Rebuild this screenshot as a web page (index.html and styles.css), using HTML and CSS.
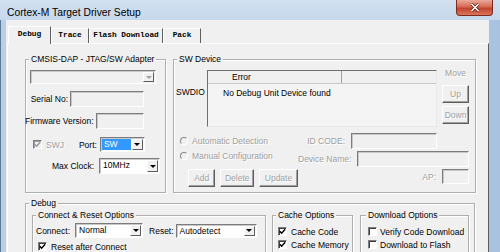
FILE: index.html
```html
<!DOCTYPE html>
<html>
<head>
  <title>Cortex-M Target Driver Setup</title>
  <link rel="stylesheet" href="styles.css">
</head>
<body>
  <div class="window">
    <div class="titlebar">
      <span class="title">Cortex-M Target Driver Setup</span>
      <div class="close-btn">
        <svg width="12" height="9" viewBox="0 0 12 9">
          <path d="M2.5 1 L9.5 8 M9.5 1 L2.5 8" stroke="#5a1a10" stroke-width="3"/>
          <path d="M2.5 1 L9.5 8 M9.5 1 L2.5 8" stroke="#fff" stroke-width="1.6"/>
        </svg>
      </div>
    </div>

    <div class="client">
      <div class="tabs">
        <div class="tab active">Debug</div>
        <div class="tab tab-trace">Trace</div>
        <div class="tab tab-flash">Flash Download</div>
        <div class="tab tab-pack">Pack</div>
      </div>

      <div class="panel">
        <div class="top-row">
          <!-- adapter -->
          <fieldset class="group adapter">
            <legend>CMSIS-DAP - JTAG/SW Adapter</legend>
            <div class="select adapter-combo disabled">
              <span class="value"></span>
              <span class="drop"></span>
            </div>
            <div class="field-row serial-row">
              <span class="lbl serial-lbl">Serial No:</span>
              <div class="edit serial-edit"></div>
            </div>
            <div class="field-row fw-row">
              <span class="lbl fw-lbl">Firmware Version:</span>
              <div class="edit fw-edit"></div>
            </div>
            <div class="field-row port-row">
              <span class="check disabled checked">
                <svg width="7" height="7" viewBox="0 0 7 7"><path d="M0.8 3.2 L2.6 5.2 L6.2 1.2" fill="none" stroke="#9a9a9a" stroke-width="1.4"/></svg>
              </span>
              <span class="muted swj">SWJ</span>
              <span class="lbl port-lbl">Port:</span>
              <div class="select port-select">
                <span class="value selected">SW</span>
                <span class="drop"></span>
              </div>
            </div>
            <div class="field-row clock-row">
              <span class="lbl clock-lbl">Max Clock:</span>
              <div class="select clock-select">
                <span class="value">10MHz</span>
                <span class="drop"></span>
              </div>
            </div>
          </fieldset>

          <!-- device -->
          <fieldset class="group device">
            <legend>SW Device</legend>
            <div class="device-list">
              <span class="swdio">SWDIO</span>
              <div class="list">
                <div class="list-head">
                  <span class="head-error">Error</span>
                  <span class="head-rest"></span>
                </div>
                <div class="list-row">No Debug Unit Device found</div>
              </div>
              <div class="side-buttons">
                <div class="btn flat">Move</div>
                <div class="btn">Up</div>
                <div class="btn">Down</div>
              </div>
            </div>
            <div class="device-config">
              <div class="radio-row"><span class="radio"></span><span class="muted">Automatic Detection</span></div>
              <div class="id-row id-code"><span class="muted">ID CODE:</span><div class="edit"></div></div>
              <div class="radio-row radio-manual"><span class="radio"></span><span class="muted">Manual Configuration</span></div>
              <div class="id-row id-name"><span class="muted">Device Name:</span><div class="edit"></div></div>
              <div class="btn-row">
                <div class="btn btn-add">Add</div>
                <div class="btn btn-delete">Delete</div>
                <div class="btn btn-update">Update</div>
              </div>
              <div class="id-row id-ap"><span class="muted">AP:</span><div class="edit"></div></div>
            </div>
          </fieldset>
        </div>

        <fieldset class="group debug">
          <legend>Debug</legend>
          <div class="debug-row">
            <fieldset class="group connect">
              <legend>Connect &amp; Reset Options</legend>
              <div class="field-row connect-row">
                <span class="lbl">Connect:</span>
                <div class="select connect-select">
                  <span class="value">Normal</span>
                  <span class="drop"></span>
                </div>
                <span class="lbl reset-lbl">Reset:</span>
                <div class="select reset-select">
                  <span class="value">Autodetect</span>
                  <span class="drop"></span>
                </div>
              </div>
              <div class="check-row reset-after">
                <span class="check checked">
                  <svg width="7" height="7" viewBox="0 0 7 7"><path d="M0.8 3.2 L2.6 5.2 L6.2 1.2" fill="none" stroke="#000" stroke-width="1.4"/></svg>
                </span>
                <span>Reset after Connect</span>
              </div>
            </fieldset>

            <fieldset class="group cache">
              <legend>Cache Options</legend>
              <div class="check-row">
                <span class="check checked">
                  <svg width="7" height="7" viewBox="0 0 7 7"><path d="M0.8 3.2 L2.6 5.2 L6.2 1.2" fill="none" stroke="#000" stroke-width="1.4"/></svg>
                </span>
                <span>Cache Code</span>
              </div>
              <div class="check-row">
                <span class="check checked">
                  <svg width="7" height="7" viewBox="0 0 7 7"><path d="M0.8 3.2 L2.6 5.2 L6.2 1.2" fill="none" stroke="#000" stroke-width="1.4"/></svg>
                </span>
                <span>Cache Memory</span>
              </div>
            </fieldset>

            <fieldset class="group download">
              <legend>Download Options</legend>
              <div class="check-row">
                <span class="check"></span>
                <span>Verify Code Download</span>
              </div>
              <div class="check-row">
                <span class="check"></span>
                <span>Download to Flash</span>
              </div>
            </fieldset>
          </div>
        </fieldset>
      </div>
    </div>
  </div>
</body>
</html>
```

FILE: styles.css
```css
body {
  margin: 0;
  font-family: "Liberation Sans", Arial, sans-serif;
  font-size: 8.5px;
  color: #000;
  overflow: hidden;
}

.window {
  width: 500px;
  height: 252px;
  background: linear-gradient(90deg, #b9cfe7, #c3d6ec 40%, #a9c2df);
  box-shadow: inset 1px 0 #5f7896;
  display: flex;
  flex-direction: column;
  overflow: hidden;
}

.titlebar {
  height: 20px;
  flex: none;
  display: flex;
  justify-content: space-between;
  align-items: flex-start;
  background: linear-gradient(#d2e0ef, #c6d8ec);
}

.title {
  font-size: 10.3px;
  line-height: 11px;
  padding: 7px 0 0 7px;
  color: #000;
}

.close-btn {
  width: 35px;
  height: 15px;
  margin-right: 7px;
  border: 1px solid #7b2a1d;
  border-top: none;
  border-radius: 0 0 4px 4px;
  background: linear-gradient(#eaa899, #d66a52 45%, #c2432c 55%, #d8755c);
  display: flex;
  align-items: center;
  justify-content: center;
}

.client {
  width: 483px;
  margin-left: 6px;
  flex: 1;
  background: #f0f0f0;
  display: flex;
  flex-direction: column;
}

/* tabs */
.tabs {
  display: flex;
  align-items: flex-end;
  padding: 6px 0 0 2px;
  height: 17px;
  box-sizing: content-box;
}

.tab {
  height: 15px;
  box-sizing: border-box;
  border-top: 1px solid #fff;
  border-left: 1px solid #fff;
  border-right: 1px solid #5e5e5e;
  font-family: "Liberation Mono", monospace;
  font-weight: bold;
  font-size: 7.8px;
  line-height: 13px;
  text-align: center;
  color: #000;
}

.tab.active {
  width: 43px;
  height: 18px;
  margin-bottom: -1px;
  background: #f0f0f0;
  position: relative;
  line-height: 15px;
}

.tab-trace { width: 38px; }
.tab-flash { width: 74px; }
.tab-pack { width: 38px; }

.panel {
  flex: 1;
  margin-left: 1px;
  border-top: 1px solid #fff;
  border-left: 1px solid #fff;
  border-right: 1px solid #5e5e5e;
  padding: 10px 0 0 17px;
}

/* group boxes */
.group {
  margin: 0;
  padding: 0;
  min-width: 0;
  border: 1px solid #aeaeae;
  box-shadow: inset 1px 1px #fff, 1px 1px #fff;
}

.group legend {
  margin-left: 3px;
  padding: 0 2px;
  line-height: 10px;
  background: #f0f0f0;
}

.top-row {
  display: flex;
  gap: 7px;
  height: 139px;
}

.adapter {
  width: 141px;
  box-sizing: border-box;
}

.device {
  width: 303px;
  box-sizing: border-box;
  padding-right: 5px;
}

/* edits and selects */
.edit {
  height: 16px;
  box-sizing: border-box;
  border: 1px solid;
  border-color: #7c7c7c #fff #fff #7c7c7c;
  box-shadow: inset 1px 1px #c8c8c8;
  background: #f0f0f0;
}

.select {
  height: 15px;
  box-sizing: border-box;
  display: flex;
  border: 1px solid;
  border-color: #7c7c7c #fff #fff #7c7c7c;
  box-shadow: inset 1px 1px #c8c8c8;
  background: #fff;
  padding: 1px;
}

.select .value {
  flex: 1;
  line-height: 11px;
  padding-left: 2px;
}

.select .value.selected {
  background: #3399ff;
  color: #fff;
  margin-right: 1px;
}

.select .drop {
  width: 11px;
  box-sizing: border-box;
  border: 1px solid;
  border-color: #fff #5e5e5e #5e5e5e #fff;
  background: #f0f0f0;
  display: flex;
  align-items: center;
  justify-content: center;
}

.select .drop::after {
  content: '';
  border-left: 3px solid transparent;
  border-right: 3px solid transparent;
  border-top: 3px solid #000;
}

.select.disabled {
  background: #f0f0f0;
}

.select.disabled .drop::after {
  border-top-color: #a0a0a0;
}

.field-row {
  display: flex;
  align-items: center;
}

.lbl {
  white-space: nowrap;
}

/* adapter group */
.adapter-combo {
  width: 126px;
  height: 14px;
  margin: 6px 0 0 4px;
}

.serial-row { margin-top: 7px; }
.serial-lbl { width: 42px; text-align: right; margin-right: 2px; }
.serial-edit { width: 74px; }

.fw-row { margin-top: 6px; }
.fw-lbl { margin-left: -1px; margin-right: 2px; }
.fw-edit { width: 48px; }

.port-row { margin-top: 8px; height: 15px; }
.port-row .check { margin-left: 7px; }
.swj { margin-left: 4px; }
.port-lbl { margin-left: 15px; margin-right: 3px; }
.port-select { width: 45px; }

.clock-row { margin-top: 6px; }
.clock-lbl { margin-left: 26px; margin-right: 5px; }
.clock-select { width: 61px; height: 16px; }

/* checkboxes and radios */
.check {
  width: 9px;
  height: 9px;
  box-sizing: border-box;
  border: 1px solid;
  border-color: #7c7c7c #fff #fff #7c7c7c;
  box-shadow: inset 1px 1px #404040;
  background: #fff;
  display: inline-flex;
  align-items: center;
  justify-content: center;
  flex: none;
}

.check.disabled {
  background: #f0f0f0;
  box-shadow: inset 1px 1px #a0a0a0;
}

.muted {
  color: #a0a0a0;
  text-shadow: 1px 1px #fff;
  white-space: nowrap;
}

.radio {
  width: 8px;
  height: 8px;
  box-sizing: border-box;
  border-radius: 50%;
  border: 1px solid;
  border-color: #8a8a8a #fff #fff #8a8a8a;
  margin-right: 4px;
  flex: none;
}

/* device group */
.device-list {
  display: flex;
  align-items: flex-start;
  height: 63px;
}

.swdio {
  width: 31px;
  margin-left: 2px;
  margin-top: 23px;
}

.list {
  width: 230px;
  height: 57px;
  margin-top: 6px;
  box-sizing: border-box;
  border: 1px solid;
  border-color: #6e6e6e #e8e8e8 #e8e8e8 #6e6e6e;
  background: #f4f4f4;
}

.list-head {
  display: flex;
  height: 12px;
  border-bottom: 1px solid #c8c8c8;
  background: #f0f0f0;
}

.head-error {
  width: 134px;
  padding-left: 24px;
  box-sizing: border-box;
  line-height: 12px;
  border-right: 1px solid #a0a0a0;
}

.list-row {
  padding: 4px 0 0 15px;
  white-space: nowrap;
}

.side-buttons {
  margin-left: 5px;
  display: flex;
  flex-direction: column;
  gap: 3px;
}

.btn {
  width: 27px;
  height: 18px;
  box-sizing: border-box;
  border: 1px solid;
  border-color: #fff #5e5e5e #5e5e5e #fff;
  box-shadow: inset -1px -1px #a0a0a0;
  background: #f0f0f0;
  color: #a0a0a0;
  text-shadow: 1px 1px #fff;
  display: flex;
  align-items: center;
  justify-content: center;
}

.btn.flat {
  border-color: #f0f0f0;
  box-shadow: none;
}

.device-config {
  display: grid;
  grid-template-columns: 118px 171px;
  grid-template-rows: 16px 16px 18px;
  row-gap: 2px;
  margin: 6px 0 0 6px;
}

.radio-row {
  display: flex;
  align-items: center;
}

.radio-manual {
  align-self: start;
  height: 10px;
}

.btn-row {
  display: flex;
  gap: 5px;
  margin-left: 8px;
}

.btn-add { width: 31px; }
.btn-delete { width: 38px; }
.btn-update { width: 39px; flex: none; }

.id-row {
  display: flex;
  align-items: center;
  justify-content: flex-end;
  gap: 6px;
}

.id-code { margin-right: 32px; }
.id-code .edit { width: 86px; }
.id-name .edit { width: 117px; }
.id-ap { align-self: start; }
.id-ap .edit { width: 27px; height: 15px; }

/* debug group */
.debug {
  width: 450px;
  box-sizing: border-box;
  margin-top: 5px;
}

.debug-row {
  display: flex;
  margin: 2px 0 0 6px;
}

.connect {
  width: 234px;
  box-sizing: border-box;
  margin-right: 6px;
}

.cache {
  width: 81px;
  box-sizing: border-box;
  margin-right: 7px;
}

.download {
  width: 109px;
  box-sizing: border-box;
}

.download legend { margin-left: 5px; }

.connect-row {
  margin: 3px 0 0 3px;
}

.connect-select {
  width: 68px;
  margin-left: 5px;
}

.reset-lbl { margin-left: 6px; margin-right: 2px; }
.reset-select { width: 81px; height: 14px; }

.check-row {
  display: flex;
  align-items: center;
  gap: 4px;
  height: 13px;
  white-space: nowrap;
}

.reset-after {
  margin: 2px 0 0 5px;
}

.cache .check-row {
  margin-left: 5px;
}

.cache .check-row:first-of-type,
.download .check-row:first-of-type {
  margin-top: 5px;
}

.download .check-row {
  margin-left: 7px;
  gap: 3px;
}
```
